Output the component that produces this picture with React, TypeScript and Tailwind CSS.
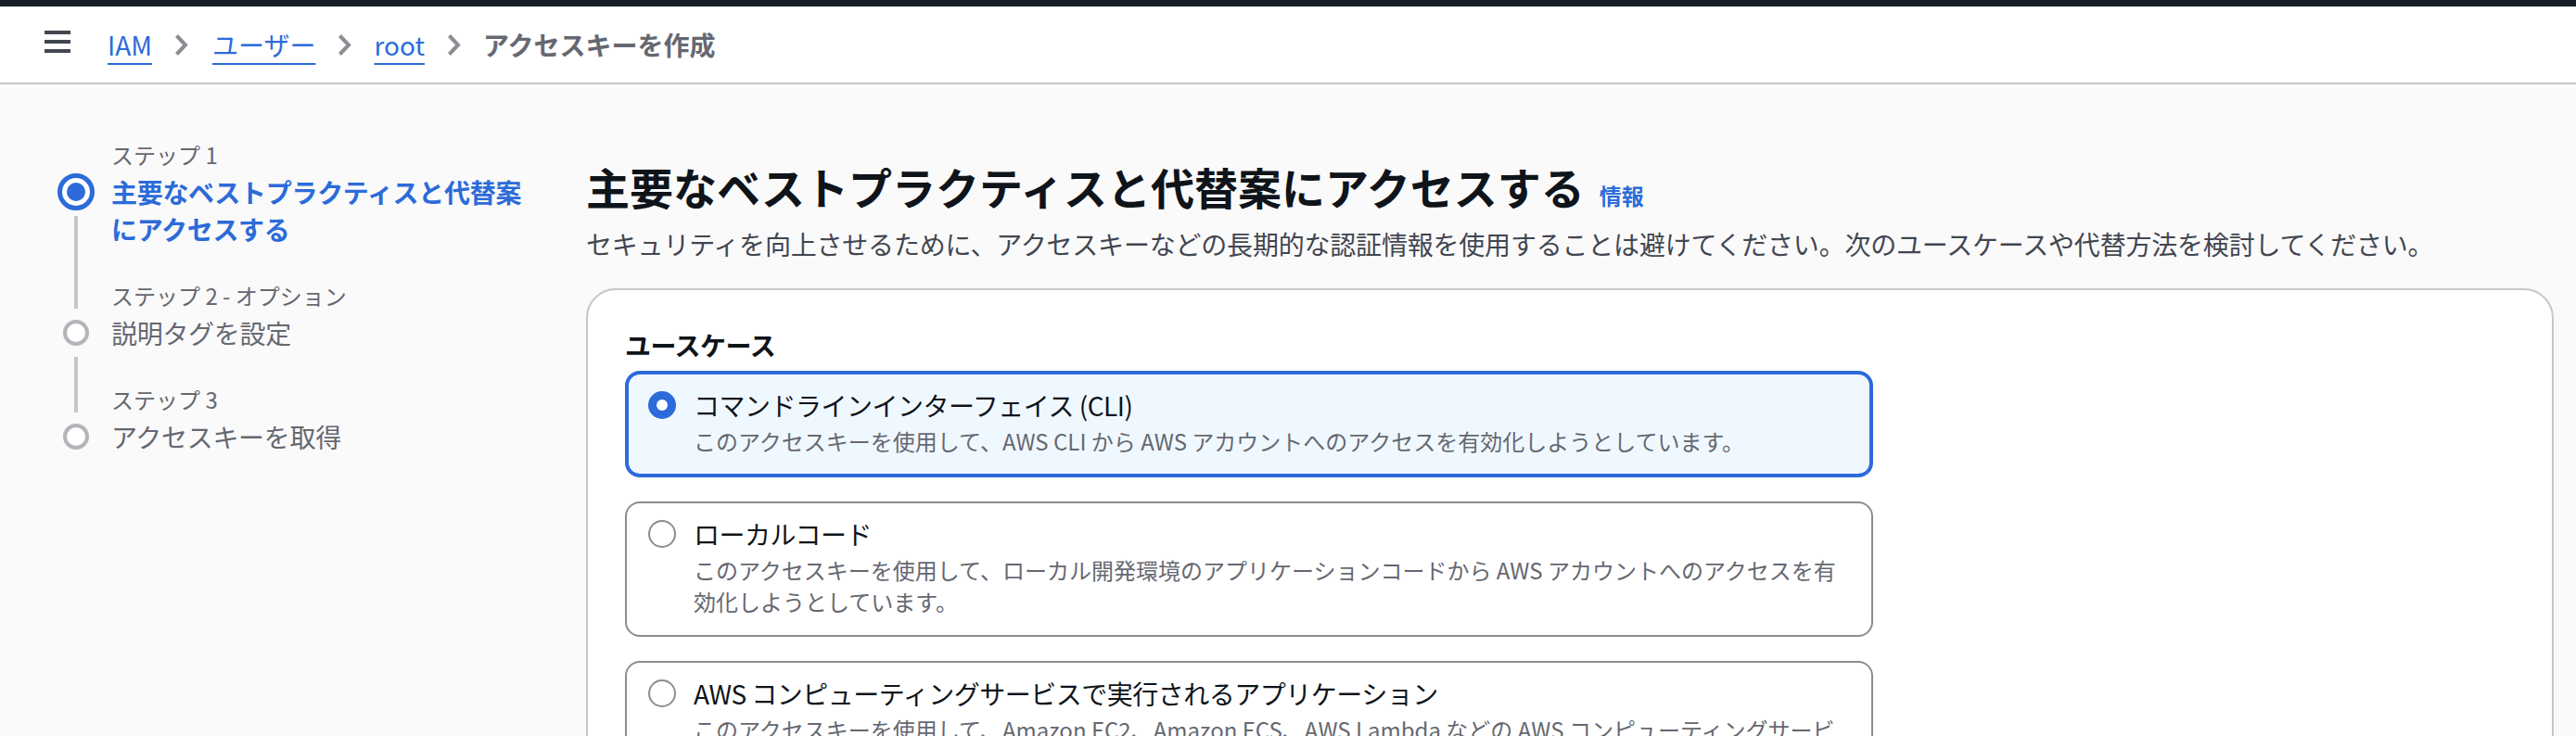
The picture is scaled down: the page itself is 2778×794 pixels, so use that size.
import { useState } from 'react';

type UseCase = {
  title: string;
  desc: string;
};

const useCases: UseCase[] = [
  {
    title: 'コマンドラインインターフェイス (CLI)',
    desc: 'このアクセスキーを使用して、AWS CLI から AWS アカウントへのアクセスを有効化しようとしています。',
  },
  {
    title: 'ローカルコード',
    desc: 'このアクセスキーを使用して、ローカル開発環境のアプリケーションコードから AWS アカウントへのアクセスを有効化しようとしています。',
  },
  {
    title: 'AWS コンピューティングサービスで実行されるアプリケーション',
    desc: 'このアクセスキーを使用して、Amazon EC2、Amazon ECS、AWS Lambda などの AWS コンピューティングサービスで実行されるアプリケーションコードから AWS アカウントへのアクセスを有効化しようとしています。',
  },
  {
    title: 'サードパーティーサービス',
    desc: 'このアクセスキーを使用して、AWS リソースをモニタリングまたは管理するサードパーティーのアプリケーションまたはサービスへのアクセスを有効化しようとしています。',
  },
];

const steps = [
  { label: 'ステップ 1', title: '主要なベストプラクティスと代替案にアクセスする' },
  { label: 'ステップ 2 - オプション', title: '説明タグを設定' },
  { label: 'ステップ 3', title: 'アクセスキーを取得' },
];

function Chevron() {
  return (
    <svg width="15" height="25" viewBox="0 0 15 25" className="mx-[24px] shrink-0">
      <polyline points="2.5,2.5 12,12.5 2.5,22.5" fill="none" stroke="#8c8c94" strokeWidth="4" strokeLinejoin="miter" />
    </svg>
  );
}

function Header() {
  return (
    <div className="bg-white border-b-2 border-[#c6c6cd]">
      <div className="h-[7px] bg-[#161d26]" />
      <div className="h-[82px] flex items-center pl-[48px] text-[28px]">
        {/* hamburger */}
        <div className="flex flex-col gap-[6px] mb-[6px] mr-[40px]">
          <div className="w-[28px] h-[4px] bg-[#424650]" />
          <div className="w-[28px] h-[4px] bg-[#424650]" />
          <div className="w-[28px] h-[4px] bg-[#424650]" />
        </div>
        <a className="text-[#2c6bd9] underline decoration-2 underline-offset-[8px]">IAM</a>
        <Chevron />
        <a className="text-[#2c6bd9] underline decoration-2 underline-offset-[8px] ml-[2px]">ユーザー</a>
        <Chevron />
        <a className="text-[#2c6bd9] underline decoration-2 underline-offset-[8px]">root</a>
        <Chevron />
        <span className="font-bold text-[#656871]">アクセスキーを作成</span>
      </div>
    </div>
  );
}

function Stepper() {
  return (
    <div className="w-[518px] shrink-0 pt-[56px]">
      {steps.map((s, i) => {
        const active = i === 0;
        const last = i === steps.length - 1;
        return (
          <div key={s.label} className="flex">
            <div className="w-[40px] shrink-0 flex flex-col items-center">
              <div className="h-[40px] w-[4px] pb-[6px]">
                {i > 0 && <div className="h-full w-full bg-[#c6c6cd]" />}
              </div>
              <div className="h-[40px] flex items-center justify-center">
                {active ? (
                  <div className="w-[40px] h-[40px] rounded-full border-[5px] border-[#2c6bd9] bg-white flex items-center justify-center">
                    <div className="w-[20px] h-[20px] rounded-full bg-[#2c6bd9]" />
                  </div>
                ) : (
                  <div className="w-[28px] h-[28px] rounded-full border-[4px] border-[#b4b4bb] bg-white" />
                )}
              </div>
              {!last && (
                <div className="flex-1 w-[4px] pt-[6px]">
                  <div className="h-full w-full bg-[#c6c6cd]" />
                </div>
              )}
            </div>
            <div className={last ? 'ml-[18px] w-[460px]' : 'ml-[18px] w-[460px] pb-[32px]'}>
              <div className="text-[24px] leading-[40px] text-[#656871]">{s.label}</div>
              <div
                className={
                  active
                    ? 'text-[28px] leading-[40px] tracking-[-0.3px] font-bold text-[#2c6bd9]'
                    : 'text-[28px] leading-[40px] tracking-[-0.3px] text-[#656871]'
                }
              >
                {s.title}
              </div>
            </div>
          </div>
        );
      })}
    </div>
  );
}

function Tile({ item, selected, onSelect }: { item: UseCase; selected: boolean; onSelect: () => void }) {
  return (
    <div
      onClick={onSelect}
      className={
        selected
          ? 'w-[1346px] rounded-[16px] border-[4px] border-[#2c6bd9] bg-[#f0f8ff] pl-[21px] pr-[26px] pt-[11px] pb-[18px] flex gap-[19px]'
          : 'w-[1346px] rounded-[16px] border-2 border-[#8c8c94] bg-white pl-[23px] pr-[28px] pt-[11px] pb-[19px] flex gap-[19px]'
      }
    >
      <div className="h-[44px] flex items-center shrink-0">
        {selected ? (
          <div className="w-[30px] h-[30px] rounded-full bg-[#2c6bd9] flex items-center justify-center">
            <div className="w-[12px] h-[12px] rounded-full bg-white" />
          </div>
        ) : (
          <div className="w-[30px] h-[30px] rounded-full border-2 border-[#8c8c94] bg-white" />
        )}
      </div>
      <div className="flex-1 min-w-0">
        <div className="text-[28px] leading-[44px] tracking-[-0.5px] text-[#0f141a]">{item.title}</div>
        <div className="text-[24px] leading-[34px] text-[#656871]">{item.desc}</div>
      </div>
    </div>
  );
}

export default function App() {
  const [selected, setSelected] = useState(0);

  return (
    <div className="w-full min-h-screen bg-[#fafafa] font-[family-name:'Noto_Sans_CJK_JP',sans-serif] overflow-hidden">
      <Header />
      <div className="flex gap-[52px] pl-[62px] pr-[24px]">
        <Stepper />
        <main className="flex-1 min-w-0 pt-[80px]">
          <div className="flex items-baseline">
            <h1 className="text-[47px] leading-[60px] font-bold text-[#0f141a]">
              主要なベストプラクティスと代替案にアクセスする
            </h1>
            <a className="ml-[16px] text-[24px] font-bold text-[#2c6bd9]">情報</a>
          </div>
          <p className="mt-[12px] text-[28px] leading-[40px] tracking-[-0.2px] text-[#424650]">
            セキュリティを向上させるために、アクセスキーなどの長期的な認証情報を使用することは避けてください。次のユースケースや代替方法を検討してください。
          </p>
          <section className="mt-[28px] rounded-[32px] border-2 border-[#c6c6cd] bg-white pt-[39px] px-[40px] pb-[40px]">
            <div className="text-[28px] leading-[40px] font-bold tracking-[-0.5px] text-[#0f141a]">ユースケース</div>
            <div className="mt-[8px] flex flex-col gap-[26px]">
              {useCases.map((u, i) => (
                <Tile key={u.title} item={u} selected={selected === i} onSelect={() => setSelected(i)} />
              ))}
            </div>
          </section>
        </main>
      </div>
    </div>
  );
}
